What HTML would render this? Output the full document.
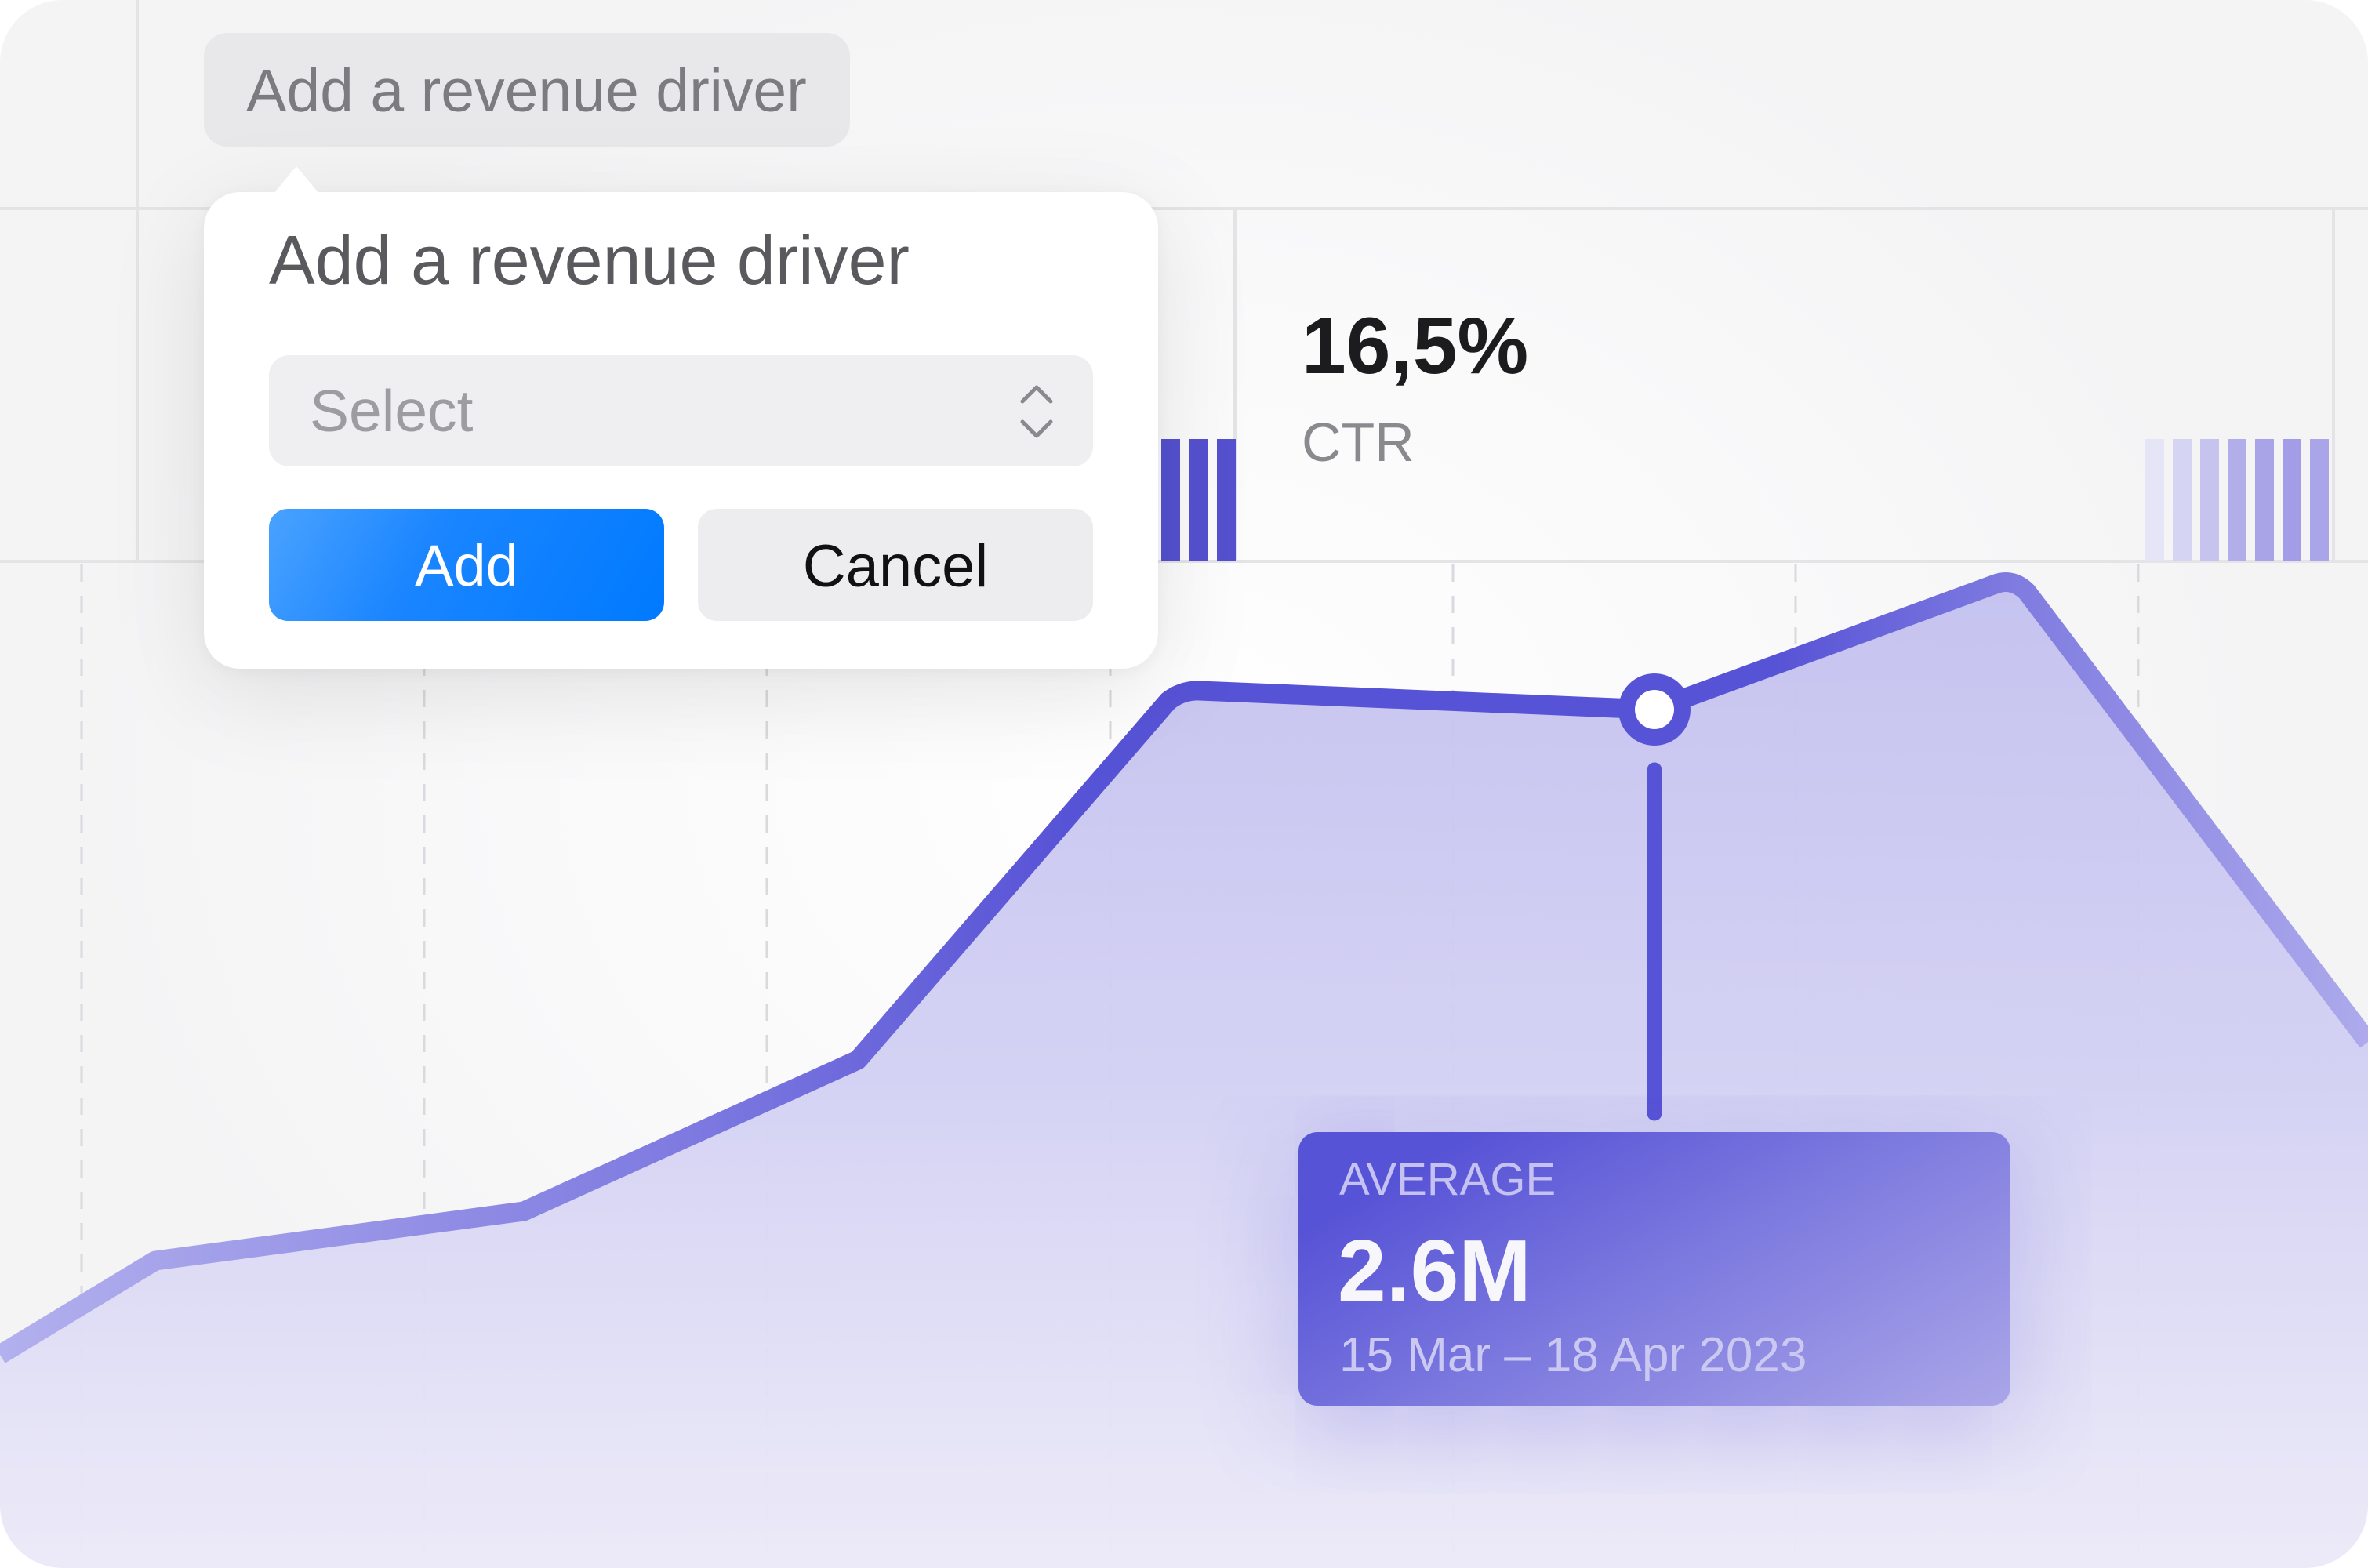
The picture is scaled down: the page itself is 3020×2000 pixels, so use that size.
<!DOCTYPE html>
<html><head><meta charset="utf-8"><style>
html,body{margin:0;padding:0;background:#fff;}
body{width:3020px;height:2000px;position:relative;overflow:hidden;font-family:"Liberation Sans",sans-serif;}
.card{position:absolute;left:0;top:0;width:3020px;height:2000px;border-radius:80px;overflow:hidden;
background:radial-gradient(ellipse 1400px 1100px at 1500px 1000px,#ffffff 0%,#f9f9fa 60%,#f4f4f5 100%);}
.abs{position:absolute;}
.txt{position:absolute;white-space:nowrap;line-height:1;}
</style></head><body>
<div class="card">
<svg class="abs" style="left:0;top:0" width="3020" height="2000" viewBox="0 0 3020 2000">
<defs>
<linearGradient id="fill" x1="0" y1="0" x2="0" y2="1" gradientUnits="objectBoundingBox">
<stop offset="0" stop-color="#c3c0ef"/><stop offset="0.5" stop-color="#d2d0f3"/><stop offset="1" stop-color="#eceaf8"/></linearGradient>
<linearGradient id="ln" x1="0" y1="0" x2="3020" y2="0" gradientUnits="userSpaceOnUse">
<stop offset="0" stop-color="#b3b0ee"/><stop offset="0.3" stop-color="#7c78e0"/><stop offset="0.45" stop-color="#5753d6"/><stop offset="0.75" stop-color="#5753d6"/><stop offset="0.85" stop-color="#7f7be0"/><stop offset="1" stop-color="#aeaaec"/></linearGradient>
</defs>
<g stroke="#e4e4e7" stroke-width="4">
<line x1="175" y1="0" x2="175" y2="716"/>
<line x1="0" y1="266" x2="3020" y2="266"/>
<line x1="0" y1="716" x2="3020" y2="716"/>
<line x1="1575" y1="266" x2="1575" y2="716"/>
<line x1="2976" y1="266" x2="2976" y2="716"/>
<line x1="0" y1="1951" x2="3020" y2="1951"/>
</g>
<g stroke="#d9d9de" stroke-width="3" stroke-dasharray="22 18">
<line x1="104" y1="720" x2="104" y2="2000"/><line x1="541" y1="720" x2="541" y2="2000"/>
<line x1="978" y1="720" x2="978" y2="2000"/><line x1="1416" y1="720" x2="1416" y2="2000"/>
<line x1="1853" y1="720" x2="1853" y2="2000"/><line x1="2290" y1="720" x2="2290" y2="2000"/>
<line x1="2727" y1="720" x2="2727" y2="2000"/>
</g>
<g>
<rect x="1481" y="560" width="24" height="156" fill="#5551cf"/>
<rect x="1516" y="560" width="24" height="156" fill="#5551cf"/>
<rect x="1552" y="560" width="24" height="156" fill="#5551cf"/>
<rect x="2736" y="560" width="24" height="156" fill="#e6e5f7"/>
<rect x="2771" y="560" width="24" height="156" fill="#d6d4f3"/>
<rect x="2806" y="560" width="24" height="156" fill="#c6c3ee"/>
<rect x="2841" y="560" width="24" height="156" fill="#b2aeea"/>
<rect x="2876" y="560" width="24" height="156" fill="#a9a4e8"/>
<rect x="2911" y="560" width="24" height="156" fill="#a29de6"/>
<rect x="2946" y="560" width="24" height="156" fill="#aaa5e8"/>
</g>
<path d="M0 1728 L198 1608 L668 1545 L1094 1352 L1490 894 Q1508 880 1530 881 L2109 905 L2545 745 Q2567 737 2585 755 L3020 1329 L3020 2000 L0 2000 Z" fill="url(#fill)" opacity="0.95"/>
<path d="M0 1728 L198 1608 L668 1545 L1094 1352 L1490 894 Q1508 880 1530 881 L2109 905 L2545 745 Q2567 737 2585 755 L3020 1329" fill="none" stroke="url(#ln)" stroke-width="25" stroke-linejoin="round"/>
<line x1="2110" y1="982" x2="2110" y2="1420" stroke="#5753d6" stroke-width="19" stroke-linecap="round"/>
<circle cx="2110" cy="905" r="46" fill="#5753d6"/><circle cx="2110" cy="905" r="25" fill="#fff"/>
</svg>

<!-- tooltip -->
<div class="abs" style="left:1656px;top:1444px;width:908px;height:349px;border-radius:24px;background:linear-gradient(150deg,#5753d6 15%,#7b78df 50%,#aba6e8 100%);box-shadow:0 20px 120px rgba(90,85,214,0.35);"></div>
<div class="txt" style="left:1708px;top:1476px;font-size:58px;color:#c5c2f2;">AVERAGE</div>
<div class="txt" style="left:1706px;top:1566px;font-size:111px;font-weight:bold;color:#f7f7fb;">2.6M</div>
<div class="txt" style="left:1708px;top:1698px;font-size:62px;color:#cbc8f2;">15 Mar – 18 Apr 2023</div>

<!-- CTR -->
<div class="txt" style="left:1660px;top:390px;font-size:102px;font-weight:bold;color:#1c1c1e;">16,5%</div>
<div class="txt" style="left:1660px;top:529px;font-size:70px;color:#8a8a8e;">CTR</div>

<!-- top button -->
<div class="abs" style="left:260px;top:42px;width:824px;height:145px;border-radius:30px;background:#e8e8ea;"></div>
<div class="txt" style="left:314px;top:78px;font-size:77px;color:#7c7c80;">Add a revenue driver</div>

<!-- popover -->
<div class="abs" style="left:260px;top:245px;width:1217px;height:608px;border-radius:46px;background:#fff;box-shadow:0 30px 160px rgba(0,0,0,0.10),0 4px 20px rgba(0,0,0,0.04);"></div>
<div class="abs" style="left:348px;top:212px;width:0;height:0;border-left:30px solid transparent;border-right:30px solid transparent;border-bottom:36px solid #fff;"></div>
<div class="txt" style="left:343px;top:288px;font-size:88px;color:#5a5a5e;">Add a revenue driver</div>
<div class="abs" style="left:343px;top:453px;width:1051px;height:142px;border-radius:26px;background:#efeff1;"></div>
<div class="txt" style="left:395px;top:487px;font-size:75px;color:#9d9da1;">Select</div>
<svg class="abs" style="left:1296px;top:488px" width="52" height="74" viewBox="0 0 52 74"><path d="M8 24 L26 6 L44 24 M8 50 L26 68 L44 50" fill="none" stroke="#8a8a8e" stroke-width="5" stroke-linecap="round" stroke-linejoin="round"/></svg>
<div class="abs" style="left:343px;top:649px;width:504px;height:143px;border-radius:24px;background:linear-gradient(120deg,#4aa2ff 0%,#1a85ff 40%,#007aff 100%);"></div>
<div class="txt" style="left:343px;top:685px;width:504px;text-align:center;font-size:74px;color:#fff;">Add</div>
<div class="abs" style="left:890px;top:649px;width:504px;height:143px;border-radius:24px;background:#ededef;"></div>
<div class="txt" style="left:890px;top:685px;width:504px;text-align:center;font-size:76px;color:#111;">Cancel</div>
</div>
</body></html>
